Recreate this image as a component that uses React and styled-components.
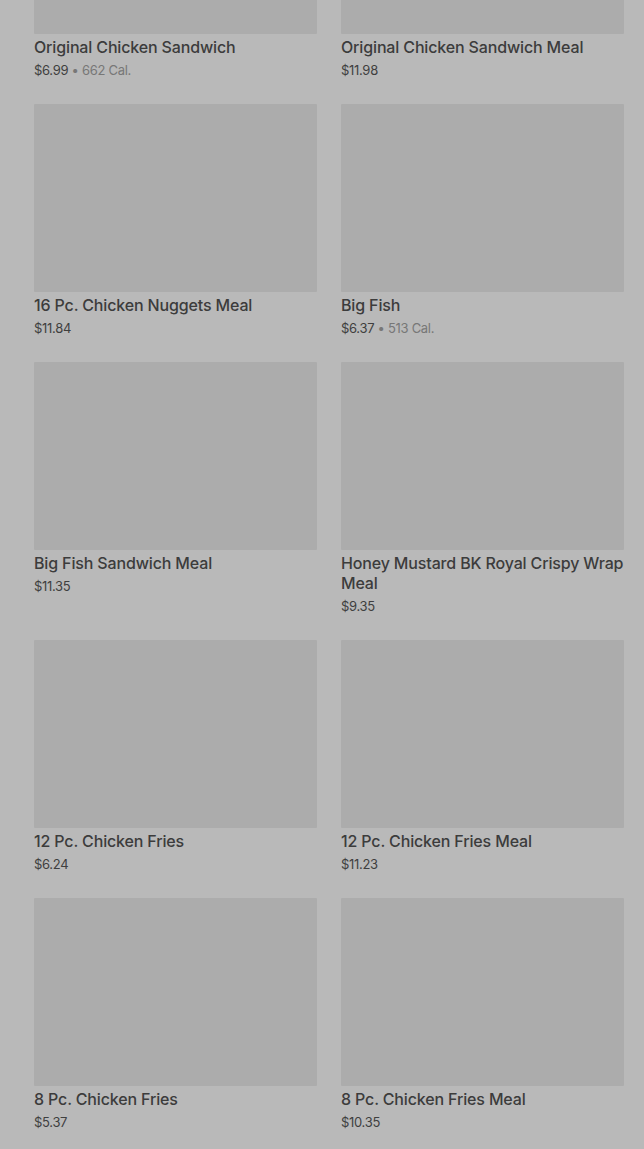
import React from "react";
import styled, { createGlobalStyle } from "styled-components";

const GlobalStyle = createGlobalStyle`
  html, body {
    margin: 0;
    padding: 0;
    background-color: #b9b9b9;
    font-family: Inter, Roboto, "Liberation Sans", sans-serif;
    overflow: hidden;
  }
`;

const Page = styled.div`
  height: 1149px;
  overflow: hidden;
  background-color: #b9b9b9;
`;

const Grid = styled.div`
  display: grid;
  grid-template-columns: 283px 283px;
  column-gap: 24px;
  row-gap: 25px;
  padding: 0 20px 0 34px;
  margin-top: -154px;
`;

const Card = styled.div`
  display: flex;
  flex-direction: column;
`;

const Picture = styled.div`
  height: 188px;
  background-color: #acacac;
  border-radius: 1px;
`;

const Title = styled.div`
  margin-top: 3px;
  font-size: 16px;
  line-height: 20px;
  font-weight: 500;
  letter-spacing: -0.15px;
  color: #3c3c3c;
`;

const Price = styled.div`
  margin-top: 4px;
  font-size: 13px;
  line-height: 18px;
  color: #3f3f3f;
  letter-spacing: -0.3px;
`;

const Cal = styled.span`
  color: #777;
`;

const items = [
  { name: "Original Chicken Sandwich", price: "$6.99", cal: "662 Cal." },
  { name: "Original Chicken Sandwich Meal", price: "$11.98" },
  { name: "16 Pc. Chicken Nuggets Meal", price: "$11.84" },
  { name: "Big Fish", price: "$6.37", cal: "513 Cal." },
  { name: "Big Fish Sandwich Meal", price: "$11.35" },
  { name: "Honey Mustard BK Royal Crispy Wrap Meal", price: "$9.35" },
  { name: "12 Pc. Chicken Fries", price: "$6.24" },
  { name: "12 Pc. Chicken Fries Meal", price: "$11.23" },
  { name: "8 Pc. Chicken Fries", price: "$5.37" },
  { name: "8 Pc. Chicken Fries Meal", price: "$10.35" },
];

const App = () => {
  return (
    <Page>
      <GlobalStyle />
      <Grid>
        {items.map((item) => (
          <Card key={item.name}>
            <Picture />
            <Title>{item.name}</Title>
            <Price>
              {item.price}
              {item.cal && <Cal> • {item.cal}</Cal>}
            </Price>
          </Card>
        ))}
      </Grid>
    </Page>
  );
};

export default App;
